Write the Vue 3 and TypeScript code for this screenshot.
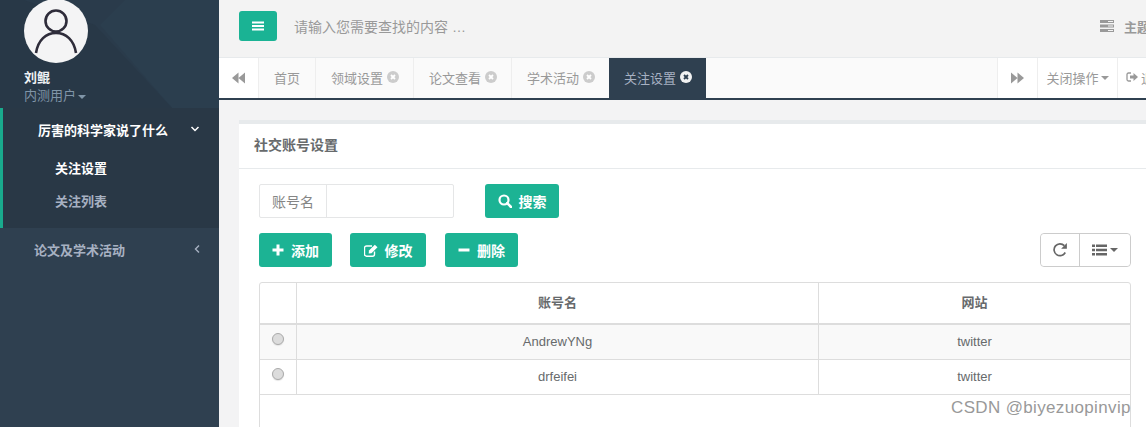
<script setup lang="ts">
interface Tab { label: string; closable: boolean; active: boolean }
interface Row { name: string; site: string }

const tabs: Tab[] = [
  { label: '首页', closable: false, active: false },
  { label: '领域设置', closable: true, active: false },
  { label: '论文查看', closable: true, active: false },
  { label: '学术活动', closable: true, active: false },
  { label: '关注设置', closable: true, active: true },
]
const rows: Row[] = [
  { name: 'AndrewYNg', site: 'twitter' },
  { name: 'drfeifei', site: 'twitter' },
]
</script>

<template>
  <div class="page">
    <aside class="side">
      <div class="profile">
        <svg class="pattern" viewBox="0 0 219 108" preserveAspectRatio="none">
          <polygon points="0,0 219,0 219,108 0,108" fill="#2a3b4b" />
          <polygon points="100,25 125,0 219,0 219,108 172,108" fill="#2b3e4e" />
          <polygon points="0,0 24,0 95,25 172,108 0,108" fill="#283847" />
        </svg>
        <div class="avatar">
          <svg viewBox="0 0 64 64" width="64" height="64">
            <circle cx="32" cy="22" r="10.5" fill="none" stroke="#2e2c3a" stroke-width="2.6" />
            <path d="M12 54 C14 41 22 34 32 34 C42 34 50 41 52 54" fill="none" stroke="#2e2c3a" stroke-width="2.6" />
          </svg>
        </div>
        <div class="uname">刘鲲</div>
        <div class="urole">内测用户<i class="caret"></i></div>
      </div>
      <div class="group active">
        <div class="link strong">
          <span>厉害的科学家说了什么</span>
          <svg class="chev" viewBox="0 0 10 10" width="10" height="10">
            <path d="M1.500 3 L5 6.500 L8.500 3" fill="none" stroke="#fff" stroke-width="1.500" />
          </svg>
        </div>
        <div class="sub current">关注设置</div>
        <div class="sub">关注列表</div>
      </div>
      <div class="group">
        <div class="link">
          <span>论文及学术活动</span>
          <svg class="chev" viewBox="0 0 10 10" width="10" height="10">
            <path d="M7 1.500 L3.500 5 L7 8.500" fill="none" stroke="#a7b1c2" stroke-width="1.400" />
          </svg>
        </div>
      </div>
    </aside>

    <main class="main">
      <header class="topbar">
        <button class="menu-btn" type="button" aria-label="菜单">
          <svg viewBox="0 0 14 12" width="14" height="12">
            <path d="M1 1.500h12v2H1zM1 5h12v2H1zM1 8.500h12v2H1z" fill="#fff" />
          </svg>
        </button>
        <span class="search-hint">请输入您需要查找的内容 …</span>
        <div class="theme">
          <svg viewBox="0 0 14 12" width="14" height="12">
            <path d="M0 0h14v3H0zM0 4.500h14v3H0zM0 9h14v3H0z" fill="#999" />
            <path d="M8 1h5v1H8zM8 5.500h5v1H8zM8 10h5v1H8z" fill="#f3f3f3" />
          </svg>
          <span>主题</span>
        </div>
      </header>

      <nav class="tabs">
        <div class="tab-arrow">
          <svg viewBox="0 0 13 12" width="13" height="12"><path d="M6.500 0.500v11L0 6zM13 0.500v11L6.500 6z" fill="#999" /></svg>
        </div>
        <div class="tab-list">
          <div v-for="t in tabs" :key="t.label" class="tab" :class="{ on: t.active }">
            <span>{{ t.label }}</span>
            <svg v-if="t.closable" class="close" viewBox="0 0 12 12" width="12" height="12">
              <circle cx="6" cy="6" r="6" :fill="t.active ? '#f2f2f2' : '#ccc'" />
              <path d="M4 4l4 4M8 4l-4 4" :stroke="t.active ? '#2f4050' : '#fff'" stroke-width="1.800" />
            </svg>
          </div>
        </div>
        <div class="tab-arrow right">
          <svg viewBox="0 0 13 12" width="13" height="12"><path d="M0 0.500v11L6.500 6zM6.500 0.500v11L13 6z" fill="#999" /></svg>
        </div>
        <div class="tab-action">关闭操作<i class="caret dark"></i></div>
        <div class="tab-exit">
          <svg viewBox="0 0 12 12" width="12" height="12">
            <path d="M5 2H2.500A1.500 1.500 0 0 0 1 3.500v5A1.500 1.500 0 0 0 2.500 10H5" fill="none" stroke="#999" stroke-width="1.300" />
            <path d="M4 4.500h3.500V2L12 6l-4.500 4V7.500H4z" fill="#999" />
          </svg>
          <span>退出</span>
        </div>
      </nav>

      <section class="content">
        <div class="card">
          <div class="card-title">社交账号设置</div>
          <div class="card-body">
            <div class="filter">
              <div class="field">
                <span class="field-label">账号名</span>
                <span class="field-input"></span>
              </div>
              <button class="btn search" type="button">
                <svg viewBox="0 0 14 14" width="14" height="14">
                  <circle cx="6" cy="6" r="4.500" fill="none" stroke="#fff" stroke-width="2.200" />
                  <path d="M9.200 9.200L13 13" stroke="#fff" stroke-width="2.600" stroke-linecap="round" />
                </svg>
                搜索
              </button>
            </div>

            <div class="toolbar">
              <button class="btn add" type="button">
                <svg viewBox="0 0 12 12" width="12" height="12"><path d="M4.500 0.500h3v4h4v3h-4v4h-3v-4h-4v-3h4z" fill="#fff" /></svg>
                添加
              </button>
              <button class="btn edit" type="button">
                <svg viewBox="0 0 14 13" width="14" height="13">
                  <path d="M10.500 7.500V10.200a2 2 0 0 1-2 2H2.500a2 2 0 0 1-2-2V4a2 2 0 0 1 2-2H8" fill="none" stroke="#fff" stroke-width="1.400" />
                  <path d="M5 6.500L10.800 0.800L13.500 3.300L7.500 9.200L4.700 9.500z" fill="#fff" />
                </svg>
                修改
              </button>
              <button class="btn del" type="button">
                <svg viewBox="0 0 12 12" width="12" height="12"><path d="M0.500 4.500h11v3H0.500z" fill="#fff" /></svg>
                删除
              </button>
              <div class="tools">
                <button class="tool refresh" type="button" aria-label="刷新">
                  <svg viewBox="0 0 14 14" width="16" height="16">
                    <path d="M11.600 9.200A5.200 5.200 0 1 1 10.800 3.200" fill="none" stroke="#666" stroke-width="1.500" />
                    <path d="M13 0.800V6H8z" fill="#666" />
                  </svg>
                </button>
                <button class="tool cols" type="button" aria-label="列">
                  <svg viewBox="0 0 15 12" width="15" height="12">
                    <path d="M0 0.500h3v2.500H0zM4 0.500h11v2.500H4zM0 4.700h3v2.500H0zM4 4.700h11v2.500H4zM0 9h3v2.500H0zM4 9h11v2.500H4z" fill="#666" />
                  </svg>
                  <i class="caret ink"></i>
                </button>
              </div>
            </div>

            <div class="table">
              <div class="row head">
                <div class="c0"></div>
                <div class="c1">账号名</div>
                <div class="c2">网站</div>
              </div>
              <div v-for="(r, i) in rows" :key="r.name" class="row" :class="{ odd: i === 0 }">
                <div class="c0"><span class="radio"></span></div>
                <div class="c1">{{ r.name }}</div>
                <div class="c2">{{ r.site }}</div>
              </div>
            </div>
          </div>
        </div>
      </section>
    </main>

    <div class="mark">CSDN @biyezuopinvip</div>
  </div>
</template>

<style>
html, body { margin: 0; overflow: hidden; }
</style>

<style scoped>
.page {
  position: relative;
  display: flex;
  width: 1146px;
  height: 427px;
  overflow: hidden;
  font-family: "Open Sans", "Noto Sans CJK SC", sans-serif;
  font-size: 13px;
  color: #676a6c;
  background: #f3f3f4;
}
.side { flex: 0 0 219px; background: #2f4050; color: #a7b1c2; }
.profile { position: relative; height: 108px; box-sizing: border-box; padding-left: 24px; color: #fff; overflow: hidden; }
.pattern { position: absolute; left: 0; top: 0; width: 100%; height: 100%; }
.avatar { position: relative; width: 64px; height: 64px; border-radius: 50%; background: #f4f4f5; margin-top: -1px; }
.avatar svg { display: block; }
.uname { position: relative; font-weight: 700; line-height: 18px; margin-top: 5px; color: #eef1f4; }
.urole { position: relative; line-height: 18px; color: #8095a8; }
.caret { display: inline-block; width: 0; height: 0; margin-left: 2px; vertical-align: middle; border-left: 4px solid transparent; border-right: 4px solid transparent; border-top: 4px solid #8095a8; }
.caret.dark { border-top-color: #999; margin-left: 2px; }
.caret.ink { border-top-color: #666; margin-left: 3px; }
.group.active { height: 120px; box-sizing: border-box; background: #293846; border-left: 3px solid #19aa8d; }
.link { display: flex; align-items: center; justify-content: space-between; height: 44px; box-sizing: border-box; padding: 0 17px 2px 34px; font-weight: 700; }
.group.active .link { padding-left: 35px; padding-right: 19px; }
.link.strong { color: #fff; }
.chev { display: block; }
.sub { height: 32px; line-height: 32px; padding-left: 52px; font-weight: 700; color: #a7b1c2; }
.sub.current { color: #fff; }
.sub.current + .sub { line-height: 34px; }
.main { flex: 1; min-width: 0; display: flex; flex-direction: column; overflow: hidden; }
.topbar { display: flex; align-items: center; height: 57px; flex: none; box-sizing: border-box; padding: 0 0 5px 20px; background: #f3f3f3; }
.menu-btn { display: flex; align-items: center; justify-content: center; width: 38px; height: 30px; padding: 0; border: 0; border-radius: 3px; background: #1ab394; }
.search-hint { margin-left: 17px; font-family: "Liberation Sans", "Noto Sans CJK SC", sans-serif; font-size: 14px; color: #999; }
.theme { display: flex; align-items: center; gap: 10px; margin-left: auto; width: 46px; flex: none; white-space: nowrap; color: #999; font-weight: 600; }
.theme svg { flex: none; }
.tabs { display: flex; flex: none; height: 43px; box-sizing: border-box; border-top: 1px solid #e7eaec; border-bottom: 2px solid #2f4050; background: #fafafa; }
.tab-arrow { flex: none; display: flex; align-items: center; justify-content: center; width: 39px; background: #fff; border-right: 1px solid #eee; box-sizing: content-box; }
.tab-arrow.right { width: 39px; border-left: 1px solid #eee; }
.tab-list { flex: 1; display: flex; min-width: 0; }
.tab { display: flex; align-items: center; gap: 4px; padding: 0 14px 2px 15px; color: #999; border-right: 1px solid #eee; }
.tab:first-child { width: 27px; padding-right: 14px; }
.tab.on { background: #2f4050; color: #a7b1c2; border-right: 0; margin-left: -1px; }
.close { display: block; }
.tab-action { flex: none; display: flex; align-items: center; justify-content: center; width: 79px; box-sizing: content-box; line-height: 37px; background: #fff; color: #999; border-right: 1px solid #eee; }
.tab-exit { flex: none; display: flex; align-items: center; gap: 3px; width: 20px; padding: 0 0 2px 8px; background: #fff; color: #999; white-space: nowrap; overflow: hidden; box-sizing: content-box; }
.tab-exit svg { flex: none; }
.content { flex: 1; min-height: 0; padding: 20px 0 0 20px; }
.card { background: #fff; border-top: 4px solid #e7eaec; height: 400px; }
.card-title { height: 45px; line-height: 42px; box-sizing: border-box; padding-left: 15px; font-weight: 700; font-size: 14px; color: #676a6c; border-bottom: 1px solid #e7eaec; }
.card-body { padding: 15px 15px 0 20px; }
.filter { display: flex; height: 34px; gap: 31px; }
.field { display: flex; box-sizing: border-box; width: 195px; height: 34px; border: 1px solid #e5e6e7; border-radius: 2px; }
.field-label { display: flex; align-items: center; justify-content: center; width: 66px; border-right: 1px solid #e5e6e7; color: #858585; font-size: 14px; }
.field-input { flex: 1; }
.btn { display: flex; align-items: center; justify-content: center; gap: 7px; height: 34px; padding: 0; border: 0; border-radius: 3px; background: #1cb394; color: #fff; font: 700 14px "Open Sans", "Noto Sans CJK SC", sans-serif; }
.search { width: 74px; }
.toolbar { display: flex; align-items: center; height: 34px; margin-top: 15px; }
.add { width: 73px; }
.edit { width: 76px; margin-left: 18px; }
.del { width: 73px; margin-left: 19px; }
.tools { display: flex; height: 34px; box-sizing: border-box; margin-left: auto; border: 1px solid #ccc; border-radius: 4px; }
.tool { display: flex; align-items: center; justify-content: center; padding: 0; border: 0; background: #fff; border-radius: 4px; }
.refresh { width: 39px; border-right: 1px solid #ccc; border-radius: 4px 0 0 4px; }
.cols { width: 50px; }
.table { margin-top: 15px; height: 160px; box-sizing: border-box; border: 1px solid #ddd; border-radius: 3px; color: #676a6c; }
.row { display: grid; grid-template-columns: 37px 522px 1fr; height: 35px; border-bottom: 1px solid #ddd; box-sizing: border-box; text-align: center; line-height: 34px; font-family: "Liberation Sans", "Noto Sans CJK SC", sans-serif; font-size: 13px; }
.row.head { height: 42px; line-height: 39px; border-bottom: 2px solid #ddd; font-weight: 700; font-size: 13px; font-family: "Open Sans", "Noto Sans CJK SC", sans-serif; }
.row.odd { background: #f9f9f9; }
.c0 { border-right: 1px solid #ddd; position: relative; }
.c1 { border-right: 1px solid #ddd; }
.radio { position: absolute; left: 12px; top: 8px; width: 12px; height: 12px; box-sizing: border-box; border: 1px solid #aaa; border-radius: 50%; background: #dcdcdc; box-shadow: 0 1px 1px #e4e4e4; }
.mark { position: absolute; left: 951px; top: 398px; font: 17px/20px "Liberation Sans", sans-serif; letter-spacing: 0.35px; color: #999; white-space: nowrap; }
</style>
